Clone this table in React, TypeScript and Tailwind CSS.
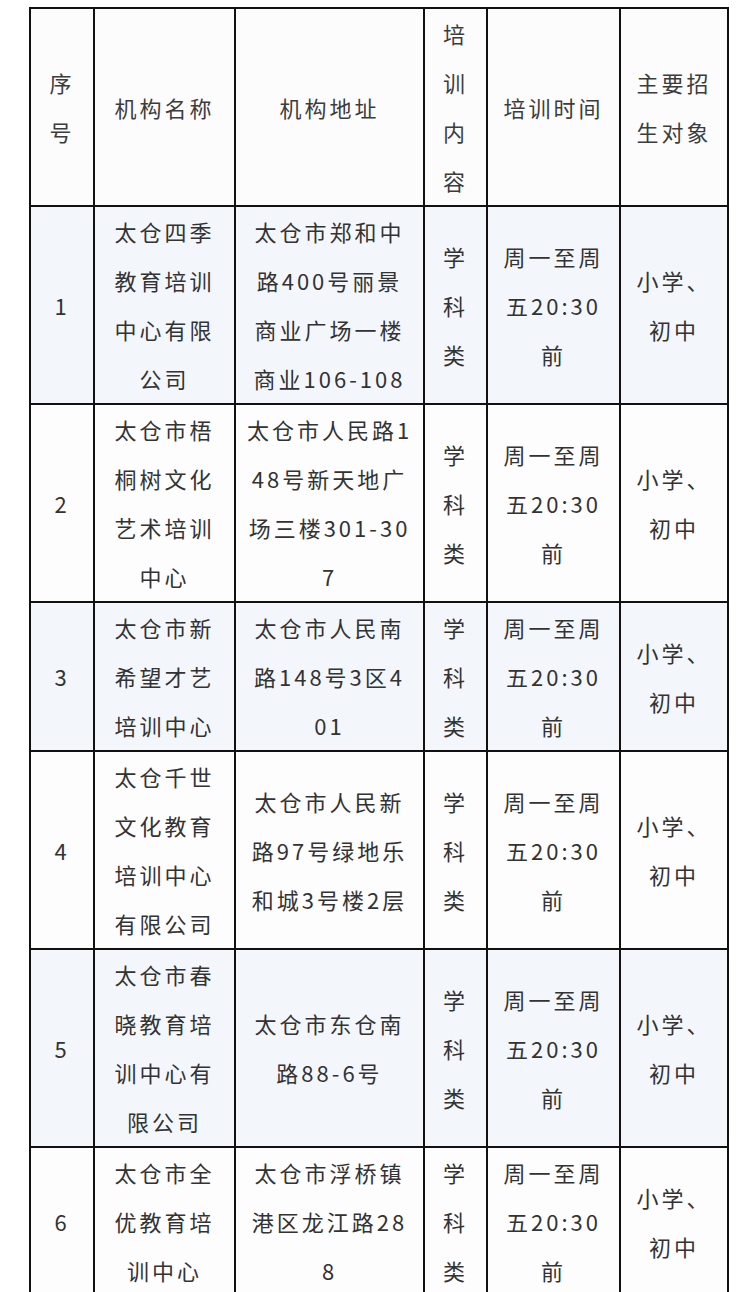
type Row = {
  cells: string[][];
  shade: boolean;
};

const header: string[][] = [
  ['序', '号'],
  ['机构名称'],
  ['机构地址'],
  ['培', '训', '内', '容'],
  ['培训时间'],
  ['主要招', '生对象'],
];

const subject = ['学', '科', '类'];
const time = ['周一至周', '五20:30', '前'];
const target = ['小学、', '初中'];

const rows: Row[] = [
  {
    shade: true,
    cells: [
      ['1'],
      ['太仓四季', '教育培训', '中心有限', '公司'],
      ['太仓市郑和中', '路400号丽景', '商业广场一楼', '商业106-108'],
      subject,
      time,
      target,
    ],
  },
  {
    shade: false,
    cells: [
      ['2'],
      ['太仓市梧', '桐树文化', '艺术培训', '中心'],
      ['太仓市人民路1', '48号新天地广', '场三楼301-30', '7'],
      subject,
      time,
      target,
    ],
  },
  {
    shade: true,
    cells: [
      ['3'],
      ['太仓市新', '希望才艺', '培训中心'],
      ['太仓市人民南', '路148号3区4', '01'],
      subject,
      time,
      target,
    ],
  },
  {
    shade: false,
    cells: [
      ['4'],
      ['太仓千世', '文化教育', '培训中心', '有限公司'],
      ['太仓市人民新', '路97号绿地乐', '和城3号楼2层'],
      subject,
      time,
      target,
    ],
  },
  {
    shade: true,
    cells: [
      ['5'],
      ['太仓市春', '晓教育培', '训中心有', '限公司'],
      ['太仓市东仓南', '路88-6号'],
      subject,
      time,
      target,
    ],
  },
  {
    shade: false,
    cells: [
      ['6'],
      ['太仓市全', '优教育培', '训中心'],
      ['太仓市浮桥镇', '港区龙江路28', '8'],
      subject,
      time,
      target,
    ],
  },
];

function Cell({ lines, header }: { lines: string[]; header?: boolean }) {
  const Tag = header ? 'th' : 'td';
  return (
    <Tag className="border-2 border-[#111] px-0 py-0 text-center align-middle font-normal">
      {lines.map((line, i) => (
        <div key={i} className="whitespace-nowrap">
          {line}
        </div>
      ))}
    </Tag>
  );
}

export default function App() {
  return (
    <div
      className="min-h-screen bg-white pt-[7px] pl-[29px] text-[22px] leading-[49px] tracking-[3px] text-[#333]"
      style={{ fontFamily: '"Noto Sans CJK SC", "Noto Sans", sans-serif' }}
    >
      <table className="table-fixed border-collapse w-[698px]">
        <colgroup>
          <col className="w-[64px]" />
          <col className="w-[141px]" />
          <col className="w-[189px]" />
          <col className="w-[63px]" />
          <col className="w-[133px]" />
          <col className="w-[108px]" />
        </colgroup>
        <thead>
          <tr className="bg-[#fcfcfd] text-[#3c3c3c]">
            {header.map((lines, i) => (
              <Cell key={i} lines={lines} header />
            ))}
          </tr>
        </thead>
        <tbody>
          {rows.map((row, r) => (
            <tr key={r} className={row.shade ? 'bg-[#f3f7fc]' : 'bg-[#fdfdfe]'}>
              {row.cells.map((lines, i) => (
                <Cell key={i} lines={lines} />
              ))}
            </tr>
          ))}
        </tbody>
      </table>
    </div>
  );
}
